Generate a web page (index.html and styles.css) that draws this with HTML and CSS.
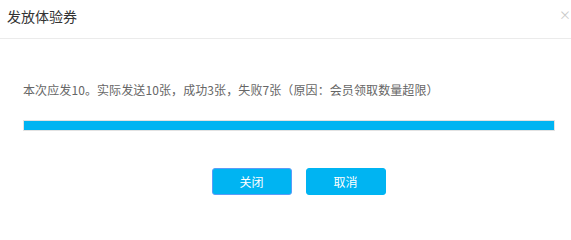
FILE: index.html
```html
<!DOCTYPE html>
<html lang="zh">
<head>
<meta charset="utf-8">
<link rel="stylesheet" href="styles.css">
</head>
<body>
<div class="dialog">
  <div class="header">
    <span class="title">发放体验券</span>
    <span class="close">×</span>
  </div>
  <div class="content">
    <p class="msg">本次应发10。实际发送10张，成功3张，失败7张（原因：会员领取数量超限）</p>
    <div class="progress"><div class="bar" style="width:100%"></div></div>
  </div>
  <div class="actions">
    <button class="btn btn-focus">关闭</button>
    <button class="btn">取消</button>
  </div>
</div>
</body>
</html>
```

FILE: styles.css
```css
html, body {
  margin: 0;
  padding: 0;
  background: #fff;
  overflow: hidden;
}
body {
  font-family: "Noto Sans CJK SC", "Noto Sans", sans-serif;
  width: 571px;
  height: 233px;
}
.dialog {
  width: 571px;
}
.header {
  height: 38px;
  border-bottom: 1px solid #ebebeb;
  display: flex;
  justify-content: space-between;
  align-items: flex-start;
  padding-left: 7px;
  position: relative;
}
.title {
  font-size: 14px;
  line-height: 33px;
  color: #333;
}
.close {
  position: absolute;
  left: 559px;
  top: 5px;
  font-size: 12px;
  color: #c8c8c8;
  line-height: 20px;
}
.content {
  padding: 40px 16px 0 23px;
}
.msg {
  margin: 0;
  font-size: 12px;
  line-height: 22px;
  color: #666;
  letter-spacing: 0.1px;
}
.progress {
  margin-top: 19px;
  width: 530px;
  height: 9px;
  border: 1px solid #e2e2e2;
  background: #fff;
}
.bar {
  height: 100%;
  background: #00b4f2;
}
.actions {
  display: flex;
  justify-content: center;
  gap: 14px;
  margin-top: 37px;
  padding-left: 26px;
}
.btn {
  width: 80px;
  height: 27px;
  border: 1px solid #00b4f2;
  border-radius: 3px;
  background: #00b4f2;
  color: #fff;
  font-family: "Noto Sans CJK SC", sans-serif;
  font-size: 12px;
  padding: 0;
}
.btn-focus {
  border-color: #5a9cf8;
}
```
